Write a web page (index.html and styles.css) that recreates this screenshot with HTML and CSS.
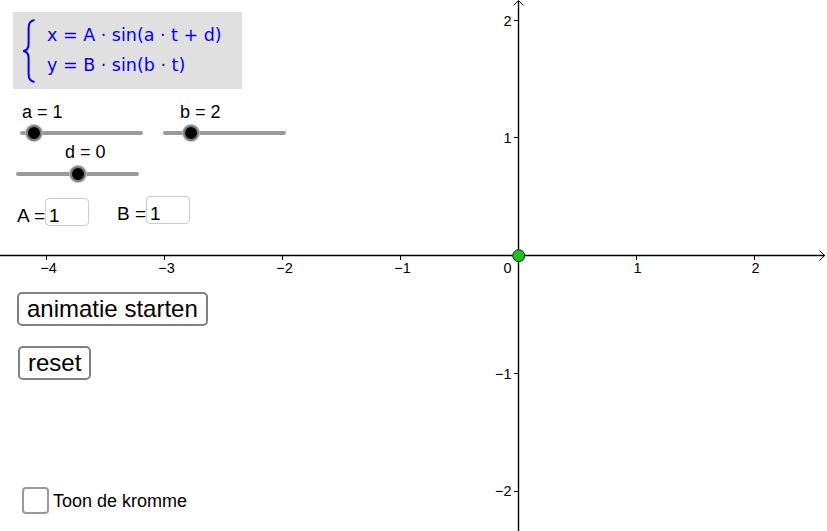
FILE: index.html
```html
<!DOCTYPE html>
<html lang="nl">
<head>
<meta charset="utf-8">
<title>Lissajous</title>
<link rel="stylesheet" href="styles.css">
</head>
<body>
<div class="applet">
  <svg class="graph" width="827" height="531" viewBox="0 0 827 531" xmlns="http://www.w3.org/2000/svg">
    <g class="axes" stroke="#000" stroke-width="1.4" fill="none">
      <line x1="0" y1="255.5" x2="825" y2="255.5"/>
      <line x1="518.5" y1="1" x2="518.5" y2="531"/>
      <polyline points="819.5,250.5 824.5,255.5 819.5,260.5" stroke-width="1"/>
      <polyline points="513.5,5.5 518.5,0.5 523.5,5.5" stroke-width="1"/>
      <g stroke-width="1">
        <line x1="46.5" y1="255.5" x2="46.5" y2="260"/>
        <line x1="164.5" y1="255.5" x2="164.5" y2="260"/>
        <line x1="282.5" y1="255.5" x2="282.5" y2="260"/>
        <line x1="400.5" y1="255.5" x2="400.5" y2="260"/>
        <line x1="636.5" y1="255.5" x2="636.5" y2="260"/>
        <line x1="754.5" y1="255.5" x2="754.5" y2="260"/>
        <line x1="514" y1="20.5" x2="518.5" y2="20.5"/>
        <line x1="514" y1="137.5" x2="518.5" y2="137.5"/>
        <line x1="514" y1="373.5" x2="518.5" y2="373.5"/>
        <line x1="514" y1="491.5" x2="518.5" y2="491.5"/>
      </g>
    </g>
    <g class="tick-labels">
      <text x="48.5" y="273" text-anchor="middle">−4</text>
      <text x="166.5" y="273" text-anchor="middle">−3</text>
      <text x="284.5" y="273" text-anchor="middle">−2</text>
      <text x="402.5" y="273" text-anchor="middle">−1</text>
      <text x="507.5" y="273" text-anchor="middle">0</text>
      <text x="637.5" y="273" text-anchor="middle">1</text>
      <text x="755.5" y="273" text-anchor="middle">2</text>
      <text x="511.5" y="26" text-anchor="end">2</text>
      <text x="511.5" y="143" text-anchor="end">1</text>
      <text x="511.5" y="378.5" text-anchor="end">−1</text>
      <text x="511.5" y="496" text-anchor="end">−2</text>
    </g>
    <circle cx="518.7" cy="255.7" r="6" fill="#19c419" stroke="#2a2a2a" stroke-width="1"/>
  </svg>

  <div class="panel">
    <div class="formula">
      <svg class="brace" width="14" height="64" viewBox="0 0 14 64" xmlns="http://www.w3.org/2000/svg">
        <path d="M12.5 1 C8.2 1.6 6.6 4 6.6 9 L6.6 25 C6.6 29.6 4.6 31.5 1.2 32 C4.6 32.5 6.6 34.4 6.6 39 L6.6 55 C6.6 60 8.2 62.4 12.5 63" fill="none" stroke="#0000ff" stroke-width="2"/>
      </svg>
      <div class="lines">
        <div class="line">x = A · sin(a · t + d)</div>
        <div class="line">y = B · sin(b · t)</div>
      </div>
    </div>

    <div class="slider-row slider-row-top">
      <div class="slider">
        <div class="slider-label label-a">a = 1</div>
        <div class="track"><span class="knob" style="left: 11.6%"></span></div>
      </div>
      <div class="slider">
        <div class="slider-label label-b">b = 2</div>
        <div class="track"><span class="knob" style="left: 22.5%"></span></div>
      </div>
    </div>

    <div class="slider-row slider-row-bottom">
      <div class="slider">
        <div class="slider-label label-d">d = 0</div>
        <div class="track"><span class="knob" style="left: 50%"></span></div>
      </div>
    </div>

    <div class="inputs">
      <div class="field field-a">
        <span class="field-label">A =</span>
        <div class="field-box">1</div>
      </div>
      <div class="field field-b">
        <span class="field-label">B =</span>
        <div class="field-box">1</div>
      </div>
    </div>

    <div class="buttons">
      <button class="btn">animatie starten</button>
      <button class="btn">reset</button>
    </div>

    <label class="check">
      <span class="check-box"></span>
      <span class="check-label">Toon de kromme</span>
    </label>
  </div>
</div>
</body>
</html>
```

FILE: styles.css
```css
html, body {
  margin: 0;
  padding: 0;
  background: #ffffff;
  overflow: hidden;
}

body {
  font-family: "Liberation Sans", Arial, sans-serif;
  color: #000;
}

.applet {
  position: relative;
  width: 827px;
  height: 531px;
  overflow: hidden;
}

.graph {
  position: absolute;
  left: 0;
  top: 0;
  display: block;
}

.tick-labels text {
  font-family: "Liberation Sans", Arial, sans-serif;
  font-size: 14.5px;
  fill: #000;
}

.panel {
  position: absolute;
  left: 0;
  top: 0;
  width: 320px;
  height: 531px;
  display: flex;
  flex-direction: column;
  align-items: flex-start;
}

/* formula */
.formula {
  margin: 12px 0 0 13px;
  width: 229px;
  height: 77px;
  background: #e0e0e0;
  display: flex;
  align-items: center;
  box-sizing: border-box;
}

.brace {
  display: block;
  margin-left: 9px;
  flex: none;
}

.lines {
  margin-left: 11px;
  margin-top: -2px;
  font-family: "DejaVu Sans", sans-serif;
  font-size: 17.5px;
  line-height: 30px;
  color: #0000ff;
}

.line {
  white-space: pre;
}

/* sliders */
.slider-row {
  display: flex;
  gap: 20px;
}

.slider-row-top {
  margin: 13px 0 0 20px;
}

.slider-row-bottom {
  margin: 0 0 0 16px;
}

.slider {
  width: 123px;
}

.slider-label {
  font-size: 18px;
  line-height: 21px;
  white-space: nowrap;
}

.label-a { margin-left: 2px; }
.label-b { margin-left: 17px; }
.label-d { margin-left: 49px; }

.slider-row-top .track { margin-top: 1px; }
.slider-row-bottom .track { margin-top: 2px; }

.track {
  position: relative;
  height: 18px;
  display: flex;
  align-items: center;
}

.track::before {
  content: "";
  display: block;
  width: 100%;
  height: 4px;
  border-radius: 2px;
  background: #9a9a9a;
}

.knob {
  position: absolute;
  top: 50%;
  width: 16px;
  height: 16px;
  box-sizing: border-box;
  border-radius: 50%;
  background: #000;
  border: 2px solid #7d7d7d;
  box-shadow: 0 0 0 1px #bdbdbd;
  transform: translate(-50%, -50%);
}

/* input fields */
.inputs {
  display: flex;
  align-items: flex-start;
  margin: 13px 0 0 17px;
  gap: 28px;
}

.field {
  display: flex;
  align-items: flex-start;
}

.field-a { margin-top: 2px; }

.field-label {
  font-size: 19px;
  line-height: 20px;
  padding-top: 8px;
  white-space: pre;
}

.field-box {
  width: 44px;
  height: 28px;
  box-sizing: border-box;
  border: 1px solid #cccccc;
  border-radius: 4px;
  padding: 7px 0 0 3px;
  font-size: 19px;
  line-height: 20px;
  background: #fff;
}

/* buttons */
.buttons {
  display: flex;
  flex-direction: column;
  align-items: flex-start;
  gap: 20px;
  margin: 66px 0 0 17px;
}

.btn {
  font-family: "Liberation Sans", Arial, sans-serif;
  font-size: 24px;
  line-height: 30px;
  height: 34px;
  box-sizing: border-box;
  padding: 0 8px;
  border: 2px solid #808080;
  border-radius: 5px;
  background: #fff;
  color: #000;
  margin: 0;
  white-space: nowrap;
}

.buttons .btn:last-child {
  margin-left: 1px;
}

/* checkbox */
.check {
  margin: auto 0 17px 22px;
  display: flex;
  align-items: center;
  gap: 4px;
}

.check-box {
  width: 27px;
  height: 27px;
  box-sizing: border-box;
  border: 2px solid #9a9a9a;
  border-radius: 4px;
  background: #fff;
}

.check-label {
  font-size: 18px;
  line-height: 20px;
  padding-top: 1px;
}
```
